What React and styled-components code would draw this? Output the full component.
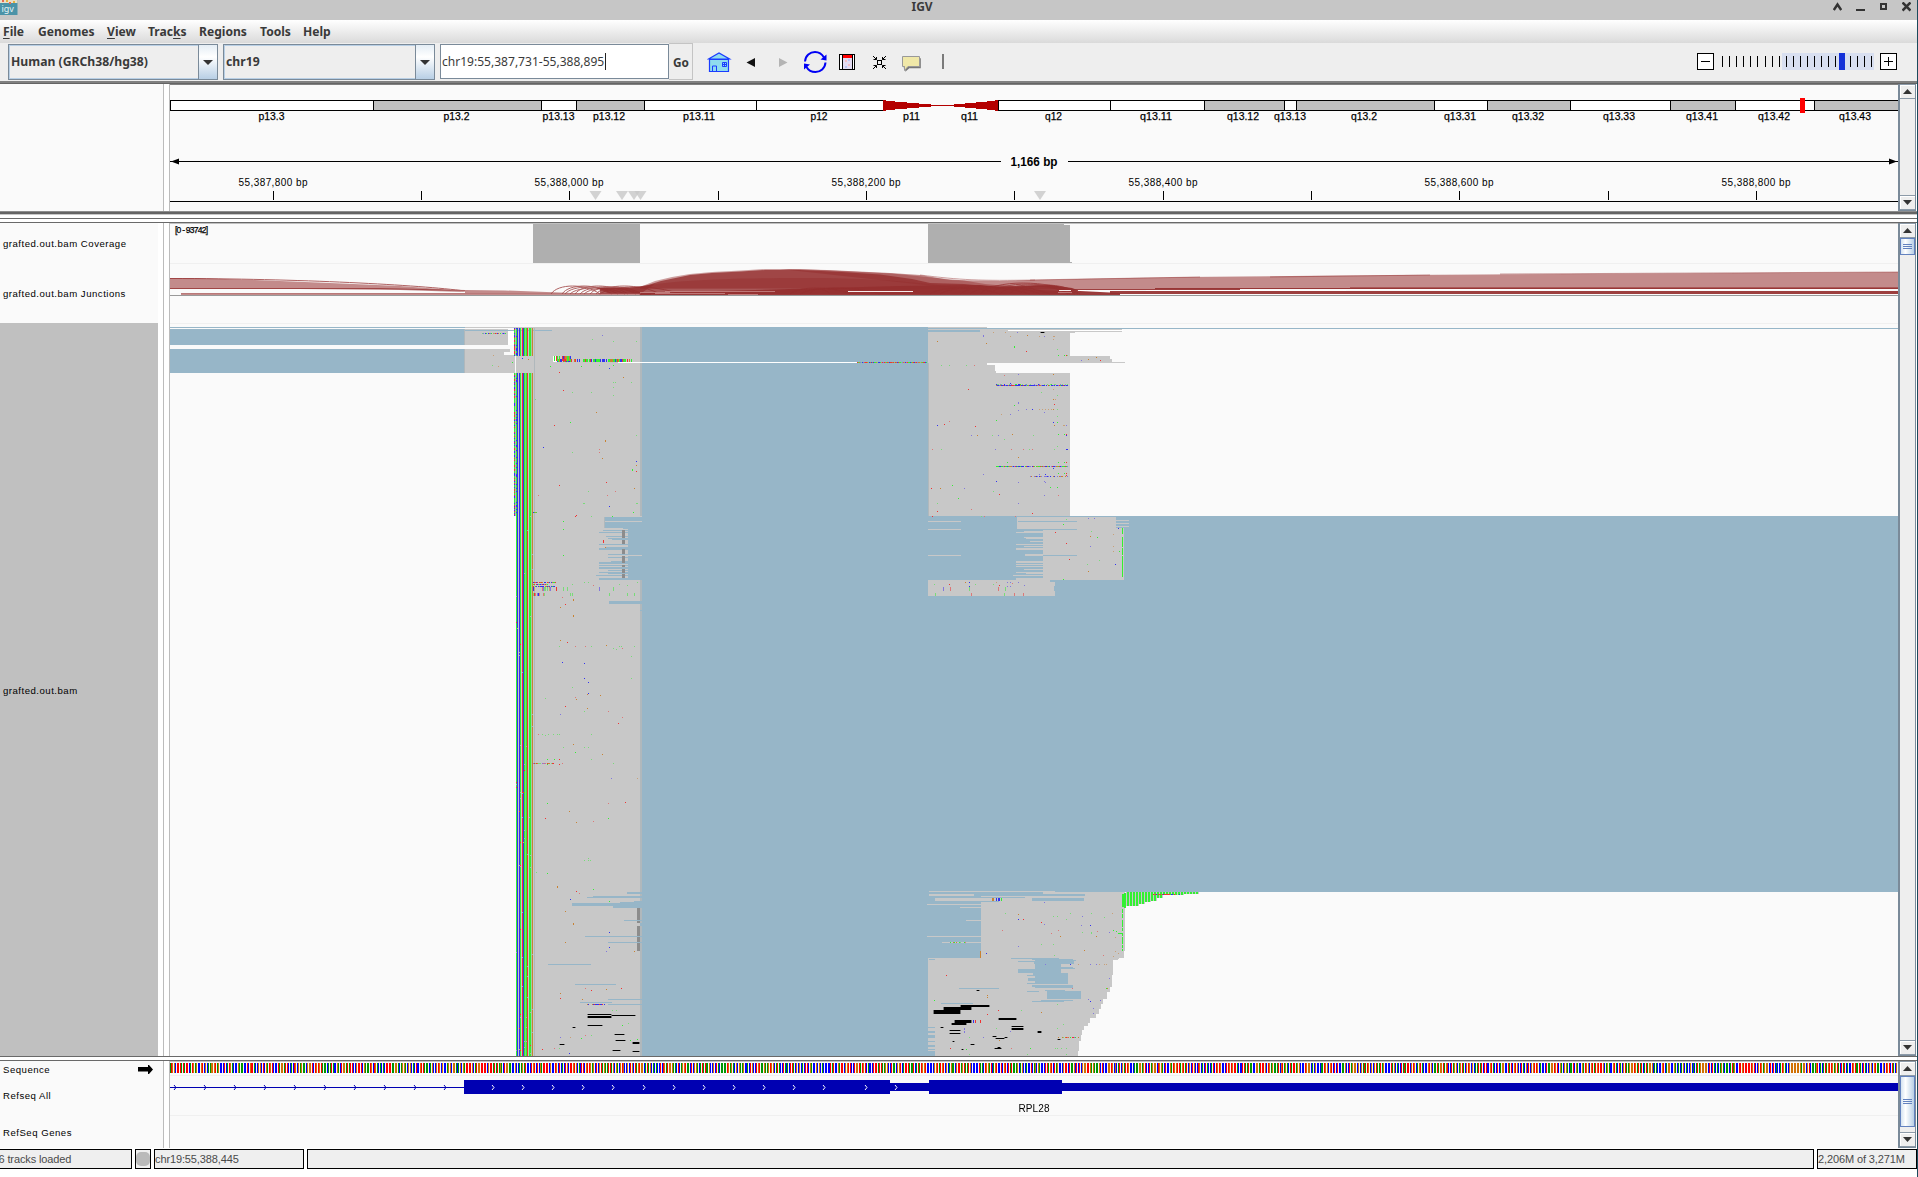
import React from "react";
import styled, { createGlobalStyle } from "styled-components";

const Global = createGlobalStyle`
  * { box-sizing: border-box; }
  html, body { margin: 0; padding: 0; background: #fff; overflow: hidden; }
`;

const C = {
  panel: "#fafafa",
  blue: "#97b6c8",
  gray: "#c8c8c8",
  edge: "#b0b8bc",
  cov: "#afafaf",
  gene: "#0000b2",
  rule: "#696969",
  hair: "#f0f0f0",
};

/* ---------- window frame ---------- */
const Frame = styled.div`
  width: 1918px;
  height: 1177px;
  display: flex;
  flex-direction: column;
  border-right: 1px solid #1b4a5c;
  background: #fff;
  overflow: hidden;
  font-family: "Noto Sans", "Open Sans", sans-serif;
  color: #3a3a3a;
`;
const TitleBar = styled.div`
  height: 20px;
  flex: none;
  display: grid;
  grid-template-columns: 911.5px auto 1fr;
  background: #c6c6c6;
`;
const Title = styled.div`
  font-weight: 700;
  font-size: 12px;
  line-height: 13px;
`;
const WindowButtons = styled.div`
  display: flex;
  justify-content: flex-end;
  gap: 14px;
  padding: 2px 6px 0 0;
`;
const MenuBar = styled.div`
  height: 23px;
  flex: none;
  display: flex;
  align-items: center;
  padding-left: 3px;
  background: linear-gradient(#fff, #dadada);
`;
const MenuItem = styled.div`
  width: ${(p) => p.$w}px;
  font-weight: 700;
  font-size: 12.1px;
  line-height: 22px;
  white-space: nowrap;
  u { text-underline-offset: 2px; }
`;

/* ---------- toolbar ---------- */
const Toolbar = styled.div`
  height: 38px;
  flex: none;
  display: flex;
  align-items: flex-start;
  padding: 1px 0 0 8px;
  background: #eeeeee;
`;
const Combo = styled.div`
  width: ${(p) => p.$w}px;
  height: 36px;
  margin-right: 5px;
  display: flex;
  border: 1px solid #7a8a99;
  box-shadow: inset 0 0 0 1px #b8cfe5;
  font-weight: 700;
  font-size: 12.2px;
  line-height: 33px;
  padding-left: 2px;
  white-space: nowrap;
`;
const ComboLabel = styled.div`
  flex: 1;
`;
const ComboArrow = styled.div`
  width: 19px;
  border-left: 1px solid #7a8a99;
  background: linear-gradient(#e4edf5, #fff 35%, #b8cfe5);
  display: flex;
  align-items: center;
  justify-content: center;
`;
const LocusField = styled.div`
  width: 229px;
  height: 35px;
  border: 1px solid #7a8a99;
  background: #fff;
  display: flex;
  align-items: center;
  font-size: 12.05px;
  line-height: 32px;
  padding-left: 1px;
  white-space: nowrap;
`;
const Caret = styled.span`
  width: 1px;
  height: 17px;
  margin-left: 1px;
  background: #222;
`;
const GoButton = styled.div`
  width: 24px;
  height: 37px;
  margin-top: -1px;
  border: 1px solid #c4c4c4;
  border-left: 0;
  padding-left: 4px;
  font-weight: 700;
  font-size: 11.8px;
  line-height: 37px;
`;
const ToolIcons = styled.div`
  display: flex;
  flex: 1;
  height: 36px;
  padding-left: 14px;
`;
const ZoomWrap = styled.div`
  display: flex;
  padding: 9px 19px 0 0;
`;

/* ---------- panels ---------- */
const HeaderRule = styled.div`
  height: 3px;
  flex: none;
  background: #808080;
  border-bottom: 1px solid #646464;
`;
const Panel = styled.div`
  display: flex;
  flex: none;
  height: ${(p) => p.$h}px;
`;
const Names = styled.div`
  width: ${(p) => (p.$wide ? 163 : 158)}px;
  margin-right: ${(p) => (p.$wide ? 0 : 5)}px;
  flex: none;
  background: ${C.panel};
  display: flex;
  flex-direction: column;
`;
const Gutter = styled.div`
  width: 7px;
  flex: none;
  background: #fff;
  border: 1px solid #bcbcbc;
  border-width: 0 1px;
`;
const Data = styled.div`
  width: 1728px;
  flex: none;
  background: ${C.panel};
  svg { display: block; }
`;
const NameRow = styled.div`
  height: ${(p) => p.$h}px;
  flex: none;
  display: flex;
  align-items: center;
  justify-content: space-between;
  padding: ${(p) => p.$top || 0}px 5px 0 3px;
  background: ${(p) => (p.$selected ? "#c0c0c0" : "transparent")};
  color: #000;
  font: 9.6px "Liberation Sans", Arial, sans-serif;
  letter-spacing: 0.5px;
  white-space: nowrap;
`;
const Split = styled.div`
  height: ${(p) => p.$h}px;
  flex: none;
  background: #fff;
  border: 1px solid ${C.rule};
  border-width: 1px 0;
`;
const HeaderFoot = styled.div`
  height: 7px;
  flex: none;
  background: linear-gradient(#8c8c8c 1px, #646464 1px 3px, #c8c8c8 3px 4px, #fff 4px);
`;

/* ---------- scroll bars ---------- */
const ScrollTrack = styled.div`
  width: 18px;
  flex: none;
  display: flex;
  flex-direction: column;
  background: #eee;
  border: 1px solid #7a8a99;
  border-width: 0 1px 1px 2px;
`;
const ScrollButton = styled.div`
  height: 15px;
  flex: none;
  border: 1px solid #8c9aa8;
  border-width: 1px 0;
  box-shadow: inset 1px 1px 0 #fff;
  display: flex;
  align-items: center;
  justify-content: center;
`;
const ScrollThumb = styled.div`
  height: ${(p) => p.$h}px;
  flex: none;
  border: 1px solid #6382bf;
  background: linear-gradient(90deg, #d5e3f1, #fff 35%, #b8cfe5);
  display: flex;
  flex-direction: column;
  align-items: center;
  justify-content: center;
  gap: 1px;
`;
const Grip = styled.div`
  width: 9px;
  height: 1px;
  background: #6382bf;
`;
const Filler = styled.div`
  flex: 1;
`;

/* ---------- status bar ---------- */
const StatusBar = styled.div`
  height: 22px;
  flex: none;
  display: flex;
  gap: 3px;
  padding-top: 1px;
  background: #fff;
`;
const StatusBox = styled.div`
  width: ${(p) => (p.$w ? p.$w + "px" : "auto")};
  flex: ${(p) => (p.$w ? "none" : 1)};
  height: 20px;
  border: 1px solid #000;
  border-left-width: ${(p) => (p.$open ? 0 : 1)}px;
  background: #efefef;
  color: #4a4a4a;
  font: 11px "Liberation Sans", Arial, sans-serif;
  line-height: 18px;
  text-indent: ${(p) => p.$indent || 0}px;
  letter-spacing: -0.12px;
  white-space: nowrap;
  overflow: hidden;
`;
const Lamp = styled.div`
  width: 14px;
  height: 14px;
  margin: 2px 0 0;
  border-radius: 5px;
  background: #bababa;
`;

const Arrow = ({ up, s = 7 }) => (
  <svg width={s + 2} height="5">
    <path d={up ? `M0 5h${s + 2}l-${(s + 2) / 2} -5z` : `M0 0h${s + 2}l-${(s + 2) / 2} 5z`} fill="#333" />
  </svg>
);

const Scroll = ({ thumb }) => (
  <ScrollTrack>
    <ScrollButton><Arrow up /></ScrollButton>
    {thumb && (
      <ScrollThumb $h={thumb}><Grip /><Grip /><Grip /></ScrollThumb>
    )}
    <Filler />
    <ScrollButton><Arrow /></ScrollButton>
  </ScrollTrack>
);

/* ---------- drawing helpers ---------- */
const Rects = ({ fill, list, opacity }) => (
  <path
    fill={fill}
    opacity={opacity}
    shapeRendering="crispEdges"
    d={list.map(([x, y, w, h]) => `M${x} ${y}h${w}v${h}h${-w}z`).join("")}
  />
);
const random = (seed) => () => {
  seed = (seed * 1664525 + 1013904223) >>> 0;
  return seed / 4294967296;
};
const BASE = { g: "#32f032", b: "#3232f0", r: "#f03232", o: "#c88232", G: "#78dc78", B: "#8278dc", R: "#dc7878", O: "#c8a078", k: "#000", d: "#8c8c8c" };

const group = (cells) => {
  const out = {};
  cells.forEach(([x, y, w, h, k]) => (out[k] = out[k] || []).push([x, y, w, h]));
  return Object.entries(out);
};
const Cells = ({ cells }) =>
  group(cells).map(([k, list]) => <Rects key={k} fill={BASE[k] || k} list={list} />);

/* mismatches stored as "x,y,base[,height]" on a grid finer than the pixels */
const marks = (ox, oy, sx, text) =>
  text.trim().split(/\s+/).map((t) => {
    const [x, y, k, h] = t.split(",");
    return [Math.floor(ox + x / sx), Math.floor(oy + y / 3), 1, +(h || 1), k];
  });

const noisyRow = (x0, x1, y, h, seed, density = 1, keys = "gbrogbroGBR") => {
  const r = random(seed);
  const out = [];
  for (let x = x0; x < x1; x++) if (r() < density) out.push([x, y, 1, h, keys[Math.floor(r() * keys.length)]]);
  return out;
};

/* ---------- ideogram and ruler ---------- */
const BANDS = [
  [170, 373, 0, "p13.3", 271.5], [373, 541, 1, "p13.2", 456.5], [541, 576, 0, "p13.13", 558.5],
  [576, 644, 1, "p13.12", 609], [644, 756, 0, "p13.11", 699], [756, 883, 0, "p12", 819],
  [883, 940, 2, "p11", 911.5], [940, 998, 2, "q11", 969.5], [998, 1110, 0, "q12", 1053.5],
  [1110, 1204, 0, "q13.11", 1156], [1204, 1284, 1, "q13.12", 1243], [1284, 1296, 0, "q13.13", 1290],
  [1296, 1434, 1, "q13.2", 1364], [1434, 1487, 0, "q13.31", 1460], [1487, 1570, 1, "q13.32", 1528],
  [1570, 1670, 0, "q13.33", 1619], [1670, 1735, 1, "q13.41", 1702], [1735, 1814, 0, "q13.42", 1774],
  [1814, 1899, 1, "q13.43", 1855],
];
const CENTROMERE = [
  [883, 101, 12, 9], [895, 102, 12, 7], [907, 103, 12, 5], [919, 104, 12, 3],
  [931, 105, 23, 1],
  [954, 104, 11, 3], [965, 103, 11, 5], [976, 102, 11, 7], [987, 101, 11, 9],
  [883, 100, 3, 11], [995, 100, 3, 11],
];
const TICKS = [273, 421, 569, 718, 866, 1014, 1163, 1311, 1459, 1608, 1756];
const LABEL_W = { 3: 17, 5: 26, 6: 32 };

const Ruler = () => (
  <svg width="1728" height="127" viewBox="170 84 1728 127" fontFamily="Liberation Sans, sans-serif">
    <Rects fill="#808080" list={[[170, 84, 1728, 1]]} />
    {BANDS.filter((b) => b[2] < 2).map(([a, b, g]) => (
      <rect key={a} x={a + 0.5} y="100.5" width={b - a} height="10" fill={g ? "#c0c0c0" : "#fff"} stroke="#000" shapeRendering="crispEdges" />
    ))}
    <Rects fill="#b40000" list={CENTROMERE} />
    <g fontSize="11" textAnchor="middle" stroke="#000" strokeWidth=".25">
      {BANDS.map(([a, , , t, c]) => (
        <text key={a} x={c} y="120" textLength={LABEL_W[t.length]} lengthAdjust="spacingAndGlyphs">{t}</text>
      ))}
    </g>
    <rect x="1800" y="98" width="5" height="15" fill="#f00" />
    <Rects fill="#000" list={[[170, 161, 831, 1], [1068, 161, 830, 1], [170, 201, 1728, 1], ...TICKS.map((t) => [t, 191, 1, 9])]} />
    <path d="M171 161.500l8-3v6zM1897 161.500l-8-3v6z" />
    <text x="1034" y="166" fontSize="12" fontWeight="700" textAnchor="middle" textLength="47" lengthAdjust="spacingAndGlyphs">1,166 bp</text>
    <g fontSize="10" textAnchor="middle">
      {["55,387,800", "55,388,000", "55,388,200", "55,388,400", "55,388,600", "55,388,800"].map((t, i) => (
        <text key={t} x={TICKS[i * 2]} y="186" textLength="69">{t + " bp"}</text>
      ))}
    </g>
    {[595.5, 622, 634, 640.5, 1040].map((x) => (
      <path key={x} d={`M${x - 6} 191h12l-6 9z`} fill="#c8c8c8" opacity=".8" />
    ))}
  </svg>
);

/* ---------- splice junction arcs ---------- */
const arc = (a, b, h, base = 294) => `M${a} ${base}C${a + (b - a) * 0.14} ${base - h * 1.33} ${b - (b - a) * 0.3} ${base - h * 1.33} ${b} ${base}`;
const LEFT_ARCS = [[551, 600, 8], [562, 612, 8], [565, 618, 7], [575, 628, 8], [580, 636, 7], [570, 625, 6], [584, 640, 6], [590, 642, 7], [596, 660, 8], [600, 680, 7]];
const RIGHT_ARCS = [[980, 1078, 11], [990, 1075, 10], [1000, 1070, 9], [960, 1050, 8], [970, 1040, 7], [1010, 1068, 8], [1020, 1080, 9], [930, 1000, 6], [940, 1030, 7], [790, 850, 6], [800, 880, 6], [810, 830, 5]];

const Junctions = () => (
  <g>
    <g fill="#952f2f">
      <path opacity=".55" d="M170 278L195 278L255 280L330 283L400 286L440 289L465 291.5L463 292L400 290L300 289L170 289z" />
      <path opacity=".55" d="M181 293h470v2H181zM465 290l40 .5l80 3v1h-120z" />
      <path opacity=".55" d="M780 269L827 270L890 273L920 275L950 280L1000 281L1030 280L1100 278.5L1185 277L1290 276L1400 275L1898 272V289H960z" />
      <path opacity=".45" d="M640 287L655 281L672 277L690 274L712 272L741 270.5L765 269L800 269L842 271L892 273.500L937 278L964 280.5L985 284L1040 289H640z" />
      <path opacity=".8" d="M630 288L648 285L661 281L690 275L712 273L741 271.5L765 270L800 270L842 272L880 274.5L912 279L930 283L964 284L1006 288L1060 291V294H600V288z" />
      <path opacity=".5" d="M640 288C660 280 740 278 800 278S900 280 960 288z" />
      <path opacity=".75" d="M596 288L640 287L655 284L640 294H610z" />
      <path opacity=".95" d="M900 286L980 285L1000 287L1050 285L1072 288L1080 291L1120 293H1120V295H640V293z" />
    </g>
    <g fill="none" stroke="#952f2f" strokeWidth="1" opacity=".75">
      {[...LEFT_ARCS, ...RIGHT_ARCS].map(([a, b, h], i) => <path key={i} d={arc(a, b, h)} />)}
      <path d="M170 278.5C300 278.5 420 285 465 291M170 288.5L380 288.5L465 290.5" />
      <path d="M920 275C960 280 980 281 1035 280M1030 280L1200 277M1270 277L1430 275M1500 274L1898 272" opacity=".6" />
    </g>
    <Rects fill="#a96060" list={[[181, 293, 460, 1]]} opacity=".4" />
    <Rects fill="#952f2f" list={[[1155, 288, 743, 1], [1110, 291, 788, 3], [1060, 289, 180, 1]]} opacity=".92" />
    <Rects fill="#952f2f" list={[[1350, 287, 548, 1]]} opacity=".55" />
    <Rects fill="#c9898a" list={[[655, 293, 70, 1], [640, 292, 30, 1], [665, 291, 110, 1], [728, 294, 30, 1], [1058, 292, 14, 1]]} opacity=".8" />
    <Rects fill="#fff" list={[[848, 291, 65, 1], [1059, 290, 12, 1], [1078, 290, 8, 1], [1146, 290, 200, 1], [1350, 289, 520, 1]]} opacity=".9" />
    <Rects fill="#999" list={[[170, 295, 1728, 1]]} />
  </g>
);

/* ---------- aligned reads ---------- */
const GRAY_READS = [
  [465, 327, 60, 1], [465, 329, 43, 16], [465, 349, 45, 3], [465, 352, 39, 3], [465, 355, 50, 18],
  [516, 327, 126, 729],
  [928, 327, 59, 1], [928, 329, 194, 1], [980, 330, 28, 1], [980, 331, 142, 1], [928, 332, 147, 1], [928, 333, 142, 23],
  [928, 356, 182, 3], [928, 359, 184, 3], [928, 362, 197, 1], [928, 363, 59, 2], [928, 365, 67, 6], [928, 371, 68, 2], [928, 373, 142, 143],
];
const BLUE_READS = [
  [170, 327, 295, 1], [170, 329, 295, 16], [170, 349, 295, 24], [465, 330, 87, 1],
  [642, 327, 286, 729], [928, 328, 970, 1], [928, 330, 52, 1], [928, 331, 52, 1],
  [642, 516, 1256, 376],
  [605, 517, 37, 12], [609, 601, 33, 3], [628, 529, 14, 51], [928, 892, 53, 66],
];
const TEETH_LEFT = [[530, 603], [532, 599], [536, 606], [538, 608], [539, 612], [544, 599], [547, 606], [548, 599], [549, 599], [554, 608], [557, 608], [561, 611], [562, 599], [563, 599], [565, 599], [567, 599], [568, 599], [570, 608], [572, 599], [573, 608], [575, 596], [578, 599], [579, 599]];
const TEETH_RIGHT = [[531, 1024], [532, 1016], [537, 1024], [538, 1026], [541, 1030], [544, 1016], [546, 1024], [548, 1016], [549, 1016], [554, 1025], [555, 1025], [561, 1016], [562, 1016], [564, 1016], [566, 1016], [569, 1024], [572, 1016], [573, 1026], [575, 1013], [578, 1016], [579, 1016]];

const STRIPES = [[516, "g"], [517, "b"], [519, "b"], [520, "g"], [522, "r"], [523, "b"], [524, "g"], [526, "g"], [527, "r"], [529, "g"], [530, "g"], [532, "o"]];

const stripes = () => {
  const out = [];
  [...STRIPES, [525, "G"], [531, "#a4cca4"]].forEach(([x, k]) => {
    out.push([x, 328, 1, 28, k], [x, 373, 1, 683, k]);
  });
  const r = random(77);
  const edge = (y) => {
    out.push([514, y, 1, 1, "gbrg"[Math.floor(r() * 4)]]);
    out.push([515, y, 1, 1, "#b4bcb4"]);
    if (r() < 0.45) out.push([516, y, 1, 1, "gbb"[Math.floor(r() * 3)]]);
  };
  for (let y = 328; y < 356; y++) edge(y);
  for (let y = 373; y < 516; y++) edge(y);
  for (let i = 0; i < 70; i++) out.push([STRIPES[Math.floor(r() * 12)][0], 516 + Math.floor(r() * 540), 1, 1, r() < 0.8 ? "#aab4aa" : "r"]);
  return out;
};

const MISMATCHES = [
  ...marks(480, 210, 2.3758, `268,388,G 290,376,B 316,394,G 373,394,G 168,469,g 188,487,r 240,469,g 283,466,G 307,475,b 316,466,g 342,502,o 316,517,G 323,517,G 360,517,G 316,532,G 198,541,r 220,547,G 264,547,G 316,556,G 133,568,G 276,607,o 214,637,g 176,646,r 373,676,G 297,690,o,2 152,712,b 283,718,R 283,727,R 220,727,G 290,745,o 373,754,b 371,766,o 363,777,g,2 371,784,r 300,817,r 190,826,r 366,835,o 321,844,R 257,844,G 304,856,R 138,856,R 247,880,G 373,880,G 307,889,b 364,907,g 228,919,r 264,919,G 198,934,g 198,958,g 100,445,b 116,448,o 78,457,g 31,436,O 29,466,G 43,469,O`),
  ...marks(900, 210, 3, `112,394,o 250,375,B,2 258,400,o 280,367,O 316,367,O 352,367,B 382,376,o 331,379,O 418,379,O 433,379,B 460,379,O 463,379,O 460,388,O 343,408,g,2 379,424,r 472,418,G 475,436,g 493,436,g 499,436,r 502,436,G 544,451,B 565,448,o 589,442,o 601,451,r 124,466,G 148,466,G 199,466,G 223,466,R 313,496,R 355,493,B 460,493,o 331,520,b 205,538,r 424,547,G 460,538,O 472,556,G 460,568,o 466,568,O 463,583,r 355,577,B,2 343,586,g 355,601,B 379,598,B 397,598,b 418,598,O 427,598,O 436,598,O 445,598,O 454,598,O 460,598,o 472,598,G 304,613,O 331,613,B 433,607,B 472,619,G 289,631,g 460,637,b 472,637,g 112,646,b 133,643,r 148,634,R 226,649,r 463,646,o 490,646,O 493,646,O 499,646,B 214,676,B 232,676,o 277,676,G 295,676,B 337,673,o 400,676,G 475,673,g 493,673,g 499,673,r 499,676,b 313,688,G 97,718,R 124,718,G 286,718,B 334,718,R 370,718,R 388,718,G 397,718,R 463,718,G 472,709,G 499,718,b 502,718,b 355,742,o 322,757,g 475,757,g 493,757,g 499,757,r 460,775,b 250,793,B 418,793,B 436,793,b 475,790,g 493,790,g 499,790,r 499,796,r 289,814,b 355,817,B 433,814,B 436,817,B 157,826,g 94,835,r 121,835,o 193,835,B 451,832,g 472,832,g 280,844,G 298,853,r 433,856,B 475,856,R 175,865,g 112,880,G 355,880,B 214,898,R 112,904,r 397,910,r 97,919,r 244,919,G 253,919,R 346,919,R 499,928,G 565,925,B 583,925,B 490,943,g 466,967,r 571,979,o 592,982,g 655,955,b 640,973,O 499,1000,r 571,1009,B 640,1009,O 640,1024,O 658,1024,g 508,1048,r 598,1051,G 562,1063,G 646,1063,b 565,1084,o 490,1108,g 574,964,G 196,1117,o 208,1117,b 289,1117,O 322,1117,B 331,1117,B 355,1117,B 103,1123,G 148,1123,r 226,1123,G 280,1123,G 298,1126,r 337,1120,R 208,1129,b 322,1129,B 331,1129,B 373,1126,B 130,1131,B,4 151,1131,R,4 208,1131,G,4 295,1131,R,4 316,1131,G,4 106,1149,G,3 214,1149,R,3 313,1149,G,3 343,1149,R,3 370,1149,R,3`),
  ...marks(480, 500, 3, `313,10,G 388,19,b 472,10,G 460,37,g 289,46,r 334,49,G 397,49,g 250,64,g 250,88,g 250,166,g 370,120,r,3 376,142,o 277,253,G 313,247,G 325,247,G 472,247,G 418,253,G 442,256,G 340,256,R 229,261,r,4 250,261,G,4 262,261,G,4 358,261,B,4 400,261,G,4 271,279,G,3 277,279,G,3 388,279,G,3 442,279,G,3 463,279,G,3 247,292,R 280,297,o,2 256,313,r 241,322,o 280,345,o,2 241,421,o 262,427,r 238,439,G 286,439,R 316,439,R 334,439,G 379,436,o 418,439,G 424,439,G 463,439,G 400,445,G 409,448,G 427,445,R 454,469,G 247,487,b 313,490,b 313,535,b 325,547,b 454,535,G 277,562,G 325,580,b 322,583,o 361,586,o 196,595,G 286,592,R 289,598,o 256,619,r 322,625,o 313,634,G 385,634,R 241,643,B 427,652,R 415,670,r 175,703,R 187,703,G 196,706,G 205,703,G 220,703,G 232,703,G 238,703,G 334,703,G 280,733,o 250,742,G 313,742,G 325,742,G 286,757,g 367,763,o 202,778,g 223,778,g 238,778,r 238,793,r 202,793,g 247,790,R 334,778,G 400,790,G 394,835,B 472,835,O 202,910,g 385,910,R 436,907,r 268,934,o 196,955,r 385,955,g`),
  ...marks(480, 800, 3, `289,67,o 340,64,R 325,175,G 313,181,G 325,181,G 331,181,G 169,217,G 202,220,g 232,260,o,2 340,268,g 289,274,r 298,280,R 271,298,b 388,304,g 256,334,o 280,370,o,2 388,397,b 256,427,o 388,442,b 379,454,B 463,454,o 316,565,R 334,571,r 379,568,o 424,565,r 241,580,o 241,595,r 307,598,o 397,631,G 409,631,G 445,670,G 427,676,g 241,712,B 271,712,O 304,715,g 316,706,R 334,706,G 187,748,r 223,745,R 238,745,G 268,760,b 451,721,g 472,718,g`),
  ...marks(900, 860, 3, `433,127,B 316,160,G 355,163,o 355,178,b 370,178,r 424,187,r 433,193,B 460,169,G 472,169,G 511,160,G 547,169,B 574,160,G 544,196,B 571,196,b 613,172,G 637,160,O 307,211,R 475,211,R 454,220,R 499,178,G 547,217,G 574,217,G 574,220,G 592,214,R 628,217,B 640,211,g 649,214,g 481,229,o 589,229,o 646,232,O 355,259,B 424,253,G 460,253,G 553,271,o 259,280,b 463,286,G 610,286,R 646,274,O 655,280,O 640,289,O 139,346,r 571,313,B 589,313,B 598,313,O 613,313,O 619,313,O 511,313,b 436,313,B 535,313,O 628,355,B 517,385,R 622,385,o 619,385,g 262,406,o 262,412,o 103,421,g 565,418,B 571,424,b 580,460,B 580,445,B 601,421,B 472,433,G 424,457,o 295,451,r 364,451,G 262,463,r 490,493,G 472,505,G 193,505,B,2 193,514,B,2 250,532,B 331,514,B 289,505,G 151,565,r 334,565,R 391,565,g 466,565,G 472,565,G 484,565,G 499,565,G 208,583,G 382,583,G 499,583,G 298,541,o 199,568,g 208,532,G`),
];

const BLACK = [
  [588, 1014, 23, 1], [588, 1016, 23, 2], [612, 1015, 23, 1], [588, 1025, 14, 1], [573, 1027, 2, 1], [615, 1034, 9, 1], [616, 1040, 9, 1], [633, 1042, 6, 2], [560, 1044, 4, 1], [613, 1050, 7, 1], [633, 1051, 6, 1],
  [961, 1005, 28, 2], [944, 1007, 27, 3], [934, 1010, 26, 4], [955, 1020, 16, 3], [952, 1023, 14, 2], [999, 1018, 17, 2], [1012, 1026, 11, 1], [1012, 1028, 11, 2], [950, 1030, 10, 1], [950, 1033, 10, 1], [1038, 1031, 3, 2], [941, 1027, 2, 1], [996, 1038, 8, 1], [993, 1036, 3, 1], [1005, 1037, 2, 1], [953, 1041, 1, 1], [971, 1044, 3, 1], [995, 1048, 6, 1], [998, 1047, 2, 1], [962, 1049, 1, 1], [1058, 1039, 2, 1], [977, 990, 2, 1], [1041, 332, 3, 1],
];

const LOWER_EDGE = [[958, 1, 1119], [959, 1, 1118], [960, 15, 1113], [975, 12, 1112], [987, 5, 1110], [992, 7, 1107], [999, 5, 1103], [1004, 5, 1101], [1009, 5, 1099], [1014, 4, 1096], [1018, 5, 1090], [1023, 3, 1088], [1026, 4, 1084], [1030, 5, 1082], [1035, 6, 1081], [1041, 10, 1079], [1051, 5, 1078]];

const BLOB = [
  [1011, 958, 48, 1], [1032, 959, 41, 1], [1035, 960, 41, 1], [1018, 961, 16, 1], [1034, 961, 40, 3], [1035, 964, 26, 4], [1035, 967, 38, 1], [1018, 969, 17, 4], [1035, 968, 26, 5], [1033, 973, 35, 2], [1035, 975, 33, 9],
  [1027, 975, 8, 1], [1028, 978, 7, 3], [1027, 983, 41, 1], [1032, 985, 41, 2], [1035, 987, 38, 1], [1027, 991, 12, 1], [1045, 990, 20, 1], [1047, 991, 34, 8], [1041, 1000, 32, 1], [1032, 1001, 32, 1], [1061, 968, 14, 1],
];

/* height of the green soft-clip comb at each column */
const combHeight = (x) => (x < 1137 ? 14 : x < 1143 ? 12 : x < 1149 ? 10 : x < 1157 ? 9 : x < 1162 ? 6 : x < 1182 ? 3 : 2);
const COMB = Array.from({ length: 24 }, (_, i) => {
  const x = 1127 + i * 3;
  return [x, 892, 2, combHeight(x)];
});

const Reads = () => (
  <g>
    <Rects fill={C.gray} list={GRAY_READS} />
    <Rects fill={C.blue} list={BLUE_READS} />
    <Rects fill={C.edge} list={[[640, 327, 2, 189], [640, 604, 2, 299], [640, 580, 2, 21], [928, 363, 1, 153], [464, 329, 1, 16], [464, 349, 1, 24], [604, 517, 1, 12], [640, 908, 2, 148], [534, 328, 1, 728]]} />
    <Rects fill={C.blue} list={[...TEETH_LEFT.map(([y, x]) => [x, y, 642 - x, 1]), [640, 610, 2, 1]]} />
    <Rects fill={C.gray} list={[[605, 521, 37, 1], [603, 528, 20, 1], [628, 555, 14, 1], [928, 521, 33, 1], [928, 529, 33, 1], [928, 555, 33, 1]]} />
    <Rects fill={C.gray} list={[[1017, 517, 99, 12], [1043, 528, 81, 52], [1022, 528, 22, 1], [928, 580, 122, 2], [928, 582, 127, 4], [928, 586, 126, 5], [928, 591, 127, 5], [1116, 520, 13, 1], [1116, 523, 13, 1], [1116, 526, 13, 1], ...TEETH_RIGHT.map(([y, x]) => [x, y, 1043 - x, 1])]} />
    <Rects fill={C.blue} list={[[1051, 516, 847, 1], [1018, 521, 59, 1], [1043, 529, 34, 1], [1043, 555, 34, 1]]} />
    <Rects fill="#8c8c8c" list={[[622, 530, 3, 8], [622, 540, 3, 4], [622, 549, 3, 5], [622, 556, 3, 7], [622, 565, 3, 2], [622, 569, 3, 4], [622, 574, 3, 4], [637, 908, 3, 15], [637, 926, 3, 25]]} />
    <Rects fill={C.gray} list={[[929, 891, 126, 1], [981, 892, 144, 59], [981, 951, 143, 7], [929, 894, 45, 2], [935, 898, 46, 3], [927, 904, 54, 1], [960, 907, 21, 1], [966, 920, 15, 1], [927, 936, 54, 1], [942, 942, 39, 1], ...LOWER_EDGE.map(([y, h, x]) => [928, y, x - 928, h]), ...COMB.map(([x, y, , h]) => [x - 1, y, 4, h])]} />
    <Rects fill={C.blue} list={[[928, 892, 115, 2], [975, 894, 110, 2], [965, 897, 60, 1], [1032, 898, 52, 3], [930, 901, 69, 1], ...BLOB, [959, 988, 40, 1], [941, 1003, 32, 1], [929, 959, 6, 1], ...[1027, 1031, 1032, 1035, 1036, 1037, 1041, 1045, 1046, 1049, 1051, 1052, 1053, 1054, 1055].map((y) => [928, y, 7, 1])]} />
    <Rects fill={C.blue} list={[[627, 892, 15, 2], [593, 896, 49, 1], [587, 897, 55, 1], [634, 901, 8, 1], [620, 902, 22, 1], [572, 903, 70, 3], [613, 906, 29, 2], [624, 920, 18, 1], [640, 923, 2, 3], [585, 936, 57, 1], [608, 942, 34, 1], [548, 964, 43, 1], [575, 984, 41, 1], [608, 999, 34, 1], [580, 1002, 32, 1], [608, 1004, 34, 1]]} />
    <Cells cells={stripes()} />
    <Cells cells={MISMATCHES} />
    <Rects fill="#fff" list={[[508, 331, 6, 14], [553, 356, 4, 6], [618, 362, 239, 1], [1008, 330, 115, 1]]} />
    <Cells cells={[
      ...noisyRow(482, 506, 333, 1, 5, 0.7), ...noisyRow(554, 571, 356, 5, 9, 0.8, "ggrobg"), ...noisyRow(557, 632, 359, 3, 11, 0.75, "gbrgbo"),
      ...noisyRow(857, 927, 362, 1, 21), ...noisyRow(996, 1068, 384, 1, 31, 0.4, "bBgG"), ...noisyRow(996, 1068, 385, 1, 37, 0.9, "bgbBorb"), ...noisyRow(996, 1068, 466, 1, 43, 0.9, "bgbBogr"),
      ...noisyRow(1030, 1068, 476, 1, 47, 0.7, "BoBb"), ...noisyRow(533, 556, 582, 1, 51, 0.8, "gbrob"), ...noisyRow(533, 549, 584, 1, 53, 0.7), ...noisyRow(533, 556, 586, 1, 57, 0.8, "bgrob"), ...noisyRow(533, 552, 587, 4, 59, 0.5, "GRBbGO"), ...noisyRow(533, 546, 593, 3, 61, 0.6, "gRbBGr"),
      ...noisyRow(533, 554, 763, 1, 67, 0.8, "rBoGR"), ...noisyRow(587, 606, 1004, 1, 71, 0.7, "bbbor"), ...noisyRow(992, 994, 898, 3, 73, 1, "o"), ...noisyRow(950, 966, 942, 1, 79, 0.4), ...noisyRow(968, 982, 1020, 3, 83, 0.5, "orb"), ...noisyRow(1058, 1079, 1037, 1, 89, 0.6), ...noisyRow(533, 538, 512, 1, 91, 0.8),
    ]} />
    <Rects fill="#3232f0" list={[[996, 898, 1, 3], [998, 898, 2, 3]]} />
    <Rects fill="#32f032" list={[[1001, 898, 1, 3], [1122, 528, 1, 6], [1122, 537, 1, 10], [1122, 548, 1, 7], [1122, 556, 1, 21], [1122, 894, 2, 13], [1124, 893, 2, 15], [1122, 909, 1, 4], [1122, 914, 1, 4], [1122, 920, 1, 7], [1122, 928, 1, 3], [1122, 933, 1, 3], [1122, 937, 1, 7], [1122, 945, 1, 3], [1122, 949, 1, 2], [1118, 933, 5, 1], ...COMB]} />
    <Cells cells={noisyRow(1153, 1180, 894, 1, 97, 0.6, "robr")} />
    <Rects fill="#777" list={BLACK.map(([x, y, w, h]) => [x - 1, y, w + 2, h])} />
    <Rects fill="#000" list={BLACK} />
    <Rects fill="#c88232" list={[[980, 951, 1, 7]]} />
  </g>
);

const Alignments = () => (
  <svg width="1728" height="833" viewBox="170 223 1728 833">
    <Rects fill="#c0c0c0" list={[[170, 223, 1728, 1]]} />
    <Rects fill={C.cov} list={[[533, 224, 107, 39], [928, 224, 136, 1], [928, 225, 142, 38], [1070, 262, 2, 1]]} />
    <Rects fill={C.hair} list={[[170, 263, 1728, 1], [170, 323, 1728, 1]]} />
    <text x="175" y="233" fontSize="8.5" fontFamily="Liberation Sans, sans-serif" textLength="33" stroke="#000" strokeWidth=".25">[0 - 93742]</text>
    <Junctions />
    <Reads />
  </svg>
);

/* ---------- sequence and genes ---------- */
const SEQ = (() => {
  const r = random(2024);
  const colors = ["#009600", "#0000ff", "#d17105", "#ff0000"];
  const out = [];
  for (let i = 0; i < 1166; i++) {
    const x = 170 + Math.floor(i * 1.482);
    out.push([x, 1063, 1, 10, colors[Math.floor(r() * 4)]]);
  }
  return out;
})();
const chevron = (x) => `M${x - 1} 1085l2 2.5l-2 2.5`;

const Genes = () => (
  <svg width="1728" height="87" viewBox="170 1061 1728 87">
    <Rects fill="#c0c0c0" list={[[170, 1061, 1728, 1]]} />
    <Cells cells={SEQ} />
    <Rects fill={C.hair} list={[[170, 1075, 1728, 1], [170, 1115, 1728, 1]]} />
    <Rects fill={C.gene} list={[[170, 1087, 294, 1], [464, 1080, 426, 14], [890, 1083, 39, 8], [929, 1080, 133, 14], [1062, 1083, 836, 8]]} />
    <path fill="none" stroke={C.gene} d={[175, 205, 235, 265, 295, 325, 355, 385, 415, 445].map(chevron).join("")} />
    <path fill="none" stroke="#fff" d={[493, 523, 553, 583, 613, 644, 674, 704, 734, 764, 794, 824, 866, 896].map(chevron).join("")} />
    <text x="1018.5" y="1112" fontSize="10" fontFamily="Liberation Sans, sans-serif" textLength="31">RPL28</text>
  </svg>
);

/* ---------- icons ---------- */
const Logo = () => (
  <svg width="18" height="16">
    <rect width="17.5" height="15" fill="#4b93a8" />
    <rect width="17.5" height="3" fill="#e9dfc8" />
    <path d="M2 0h2v2h-2zM9 2h2v2h-2z" fill="#e86a50" /><path d="M6 0h2v2h-2zM13 1h2v2h-2z" fill="#e8b23c" />
    <text x="1.5" y="11.500" fontSize="9" fill="#e8f4f6" fontFamily="Noto Sans, sans-serif">igv</text>
  </svg>
);

const Icons = () => (
  <svg width="245" height="36" viewBox="707 44 245 36">
    <g stroke="#1a3cff" fill="#8fdcee" strokeWidth="1.2">
      <path d="M709.5 59.5v12h19v-12z" />
      <path d="M708.5 59l10.5-6l10.5 6z" />
      <path d="M712.5 71v-5h4v5M722.5 62.500h4v4h-4zM724.500 62.500v4M722.5 64.500h4" strokeWidth="1" />
    </g>
    <path d="M746.500 62.500l8.500-4.500v9z" fill="#111" />
    <path d="M787.500 62.500l-8.500-4.500v9z" fill="#b4b4b4" />
    <g fill="none" stroke="#0000f5" strokeWidth="2">
      <path d="M805 61.500C805.5 55.500 810 52 815 52C819 52 822 54 824 57.500" />
      <path d="M825.500 62.500C825 68.500 820.500 72 815.500 72C811.500 72 808.500 70.500 806.500 67" />
    </g>
    <path d="M826.500 54.500v6l-6-1zM804 69.500v-6l6 1z" fill="#0000f5" />
    <rect x="839.500" y="54.500" width="15" height="15" fill="#fff" stroke="#000" />
    <path d="M842.500 54v16M852.500 54v16" stroke="#000" />
    <rect x="843" y="55" width="9" height="3" fill="#f00" />
    <rect x="843" y="58" width="9" height="11" fill="#e3dcf2" />
    <path d="M845 60h2v2h-2zM848 64h2v2h-2z" fill="#f4bcc4" /><path d="M848 59h2v2h-2zM845 66h2v2h-2z" fill="#bcc4f4" />
    <g stroke="#000" fill="none">
      <rect x="877.500" y="60.500" width="4" height="4" />
      <path d="M873 56l3.500 3.500M886 56l-3.500 3.500M873 69l3.500-3.500M886 69l-3.500-3.500M876.500 57v2.500h-3M882.500 57v2.500h3M876.500 68v-2.500h-3M882.500 68v-2.500h3" />
    </g>
    <path d="M903 57.500h17v10h-11.500l-4 3.500v-3.500h-1.500z" transform="translate(.8 .8)" fill="#777" />
    <path d="M902.500 56.500h17v10h-11.500l-3.500 4v-4h-2z" fill="#f0e8a8" stroke="#999" />
    <rect x="942" y="54" width="2" height="15" fill="#7a7a7a" />
  </svg>
);

const ZoomSlider = () => (
  <svg width="201" height="18" viewBox="1697 53 201 18" shapeRendering="crispEdges">
    <rect x="1697.500" y="53.500" width="16" height="16" fill="#fff" stroke="#000" />
    <path d="M1701 61.500h9" stroke="#000" />
    <rect x="1782" y="53" width="92" height="17" fill="#d8dff0" />
    <Rects fill="#000" list={Array.from({ length: 22 }, (_, i) => [Math.round(1722 + i * 7.09), 56, 1, 11])} />
    <rect x="1839" y="53" width="6" height="17" fill="#1431d8" />
    <rect x="1880.500" y="53.500" width="16" height="16" fill="#fff" stroke="#000" />
    <path d="M1884 61.500h9M1888.500 57v9" stroke="#000" />
  </svg>
);

const MENUS = [[<><u>F</u>ile</>, 35, "File"], ["Genomes", 69, "G"], [<><u>V</u>iew</>, 41, "V"], [<>Trac<u>k</u>s</>, 51, "T"], ["Regions", 61, "R"], ["Tools", 43, "To"], ["Help", 40, "H"]];

export default function App() {
  return (
    <Frame>
      <Global />
      <TitleBar>
        <Logo />
        <Title>IGV</Title>
        <WindowButtons>
          <svg width="9" height="10"><path d="M.8 8L4.500 2.500L8.200 8" fill="none" stroke="#333" strokeWidth="2.4" /></svg>
          <svg width="9" height="10"><path d="M0 8h9" stroke="#333" strokeWidth="2" /></svg>
          <svg width="9" height="10"><rect x="2" y="2" width="5" height="5" fill="none" stroke="#333" strokeWidth="2" /></svg>
          <svg width="9" height="10"><path d="M.5 .5l8 8M8.500 .5l-8 8" stroke="#333" strokeWidth="2.6" /></svg>
        </WindowButtons>
      </TitleBar>
      <MenuBar>
        {MENUS.map(([t, w, k]) => <MenuItem key={k} $w={w}>{t}</MenuItem>)}
      </MenuBar>
      <Toolbar>
        <Combo $w={210}><ComboLabel>Human (GRCh38/hg38)</ComboLabel><ComboArrow><Arrow s={8} /></ComboArrow></Combo>
        <Combo $w={212}><ComboLabel>chr19</ComboLabel><ComboArrow><Arrow s={8} /></ComboArrow></Combo>
        <LocusField>chr19:55,387,731-55,388,895<Caret /></LocusField>
        <GoButton>Go</GoButton>
        <ToolIcons><Icons /></ToolIcons>
        <ZoomWrap><ZoomSlider /></ZoomWrap>
      </Toolbar>
      <HeaderRule />
      <Panel $h={127}>
        <Names $wide />
        <Gutter />
        <Data><Ruler /></Data>
        <Scroll />
      </Panel>
      <HeaderFoot />
      <Split $h={5} />
      <Panel $h={833}>
        <Names>
          <NameRow $h={41}>grafted.out.bam Coverage</NameRow>
          <NameRow $h={59}>grafted.out.bam Junctions</NameRow>
          <NameRow $h={733} $top={2} $selected>grafted.out.bam</NameRow>
        </Names>
        <Gutter />
        <Data><Alignments /></Data>
        <Scroll thumb={17} />
      </Panel>
      <Split $h={5} />
      <Panel $h={87}>
        <Names $wide>
          <NameRow $h={15} $top={1}>
            Sequence
            <svg width="20" height="9"><path d="M0 2h10v-2h1l4 4.500l-4 4.500h-1v-2.500h-10z" /></svg>
          </NameRow>
          <NameRow $h={39}>Refseq All</NameRow>
          <NameRow $h={33} $top={2}>RefSeq Genes</NameRow>
        </Names>
        <Gutter />
        <Data><Genes /></Data>
        <Scroll thumb={51} />
      </Panel>
      <StatusBar>
        <StatusBox $w={132} $indent={-1.5} $open>6 tracks loaded</StatusBox>
        <StatusBox $w={16}><Lamp /></StatusBox>
        <StatusBox $w={150}>chr19:55,388,445</StatusBox>
        <StatusBox />
        <StatusBox $w={100}>2,206M of 3,271M</StatusBox>
      </StatusBar>
    </Frame>
  );
}
